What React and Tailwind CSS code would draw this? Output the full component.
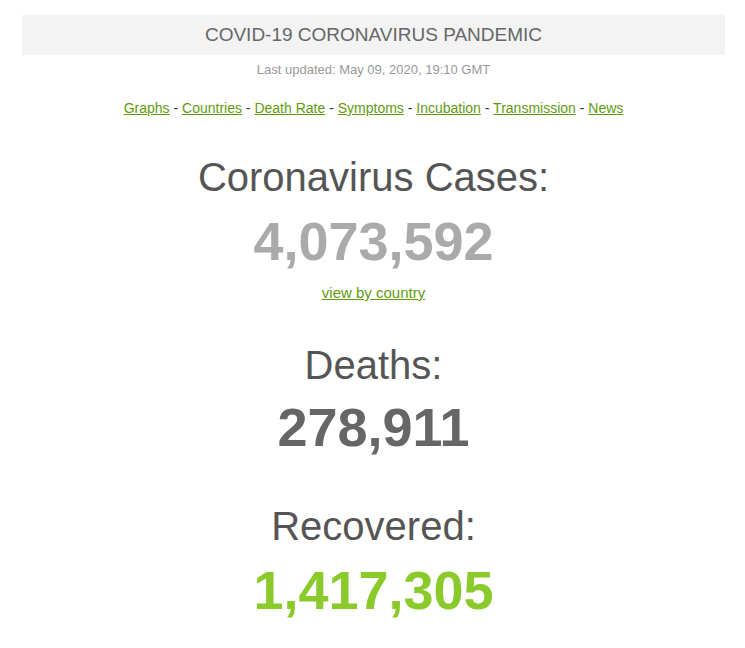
const links = ["Graphs", "Countries", "Death Rate", "Symptoms", "Incubation", "Transmission", "News"];

function App() {
  return (
    <div className="min-h-screen bg-white pl-[22px] pr-[20px] pt-[15px] text-center font-['Liberation_Sans',Arial,sans-serif]">
      {/* Title bar */}
      <div className="h-[40px] bg-[#f3f3f3] flex items-center justify-center text-[19px] text-[#666]">
        COVID-19 CORONAVIRUS PANDEMIC
      </div>

      <div className="mt-[5px] text-[13px] leading-[20px] text-[#999]">
        Last updated: May 09, 2020, 19:10 GMT
      </div>

      <div className="mt-[18px] text-[14px] leading-[20px] text-[#333]">
        {links.map((l, i) => (
          <span key={l}>
            <a href="#" className="text-[#5f9b10] underline">
              {l}
            </a>
            {i < links.length - 1 && " - "}
          </span>
        ))}
      </div>

      {/* Counters */}
      <h1 className="mt-[35px] text-[40px] leading-[48px] text-[#555]">Coronavirus Cases:</h1>
      <div className="mt-[10px] text-[54px] leading-[60px] font-bold text-[#aaa]">4,073,592</div>
      <div className="mt-[12px] text-[15px] leading-[20px]">
        <a href="#" className="text-[#5f9b10] underline">
          view by country
        </a>
      </div>

      <h1 className="mt-[38px] text-[40px] leading-[48px] text-[#555]">Deaths:</h1>
      <div className="mt-[8px] text-[54px] leading-[60px] font-bold text-[#666]">278,911</div>

      <h1 className="mt-[45px] text-[40px] leading-[48px] text-[#555]">Recovered:</h1>
      <div className="mt-[10px] text-[54px] leading-[60px] font-bold text-[#8aca2b]">1,417,305</div>
    </div>
  );
}

export default App;
